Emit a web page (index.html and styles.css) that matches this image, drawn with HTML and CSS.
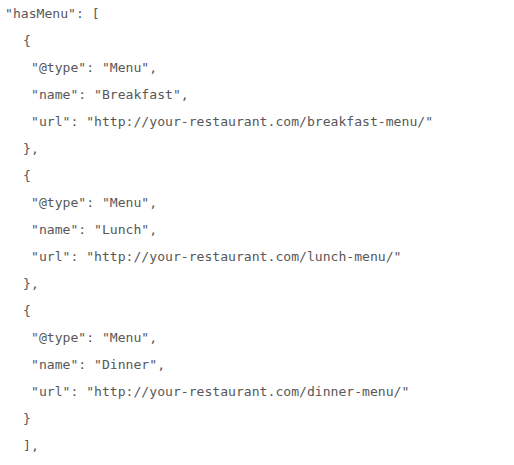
FILE: index.html
```html
<!DOCTYPE html>
<html lang="en">
<head>
<meta charset="utf-8">
<title>hasMenu</title>
<link rel="stylesheet" href="styles.css">
</head>
<body>
<div class="code">
  <div class="line">"hasMenu": [</div>
  <div class="line i1">{</div>
  <div class="line i2">"@type": "Menu",</div>
  <div class="line i2">"name": "Breakfast",</div>
  <div class="line i2">"url": "http://your-restaurant.com/breakfast-menu/"</div>
  <div class="line i1">},</div>
  <div class="line i1">{</div>
  <div class="line i2">"@type": "Menu",</div>
  <div class="line i2">"name": "Lunch",</div>
  <div class="line i2">"url": "http://your-restaurant.com/lunch-menu/"</div>
  <div class="line i1">},</div>
  <div class="line i1">{</div>
  <div class="line i2">"@type": "Menu",</div>
  <div class="line i2">"name": "Dinner",</div>
  <div class="line i2">"url": "http://your-restaurant.com/dinner-menu/"</div>
  <div class="line i1">}</div>
  <div class="line i1">],</div>
</div>
</body>
</html>
```

FILE: styles.css
```css
html, body {
  margin: 0;
  padding: 0;
  background: #ffffff;
}

.code {
  display: flex;
  flex-direction: column;
  padding: 0 0 0 5px;
  font-family: "DejaVu Sans Mono", "Liberation Mono", monospace;
  font-size: 13.1px;
  line-height: 27px;
  color: #585858;
  white-space: pre;
}

.i1 {
  padding-left: 18px;
}

.i2 {
  padding-left: 26px;
}
```
